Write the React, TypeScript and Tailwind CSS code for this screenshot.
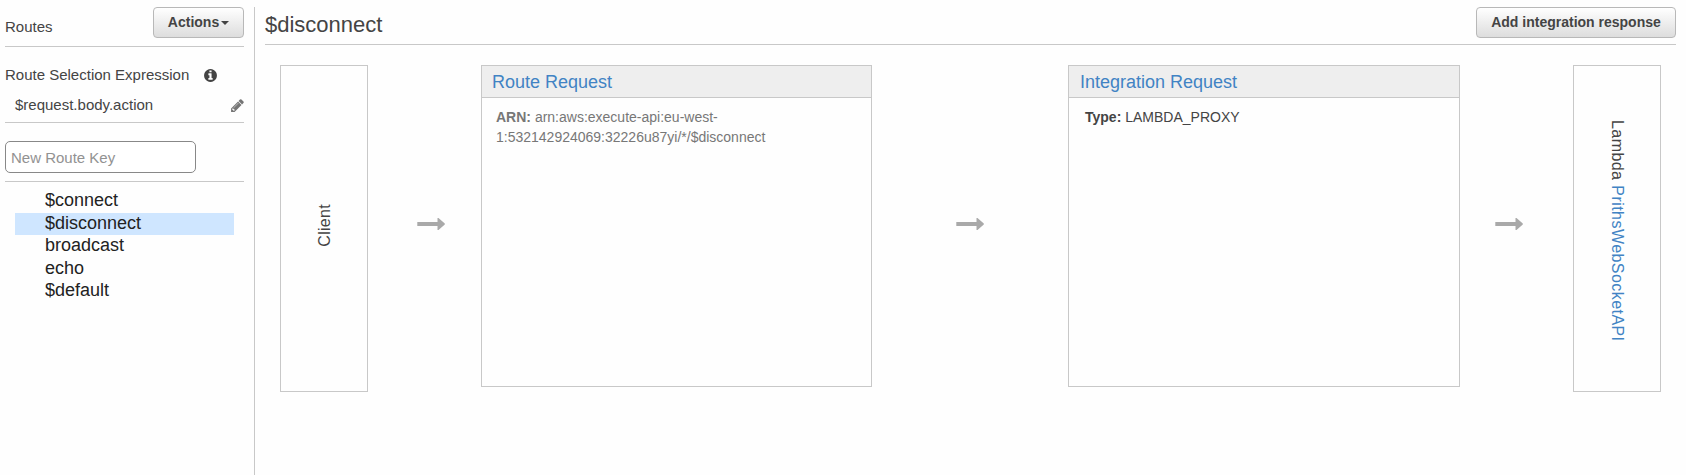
import React from "react";

const routes = ["$connect", "$disconnect", "broadcast", "echo", "$default"];

function ActionButton({ children, className = "" }: { children: React.ReactNode; className?: string }) {
  return (
    <button
      className={`flex h-[31px] items-center justify-center rounded-[4px] border border-[#b8b8b8] bg-linear-to-b from-white to-[#dddddd] pb-[2px] text-sm font-bold text-[#444444] ${className}`}
    >
      {children}
    </button>
  );
}

function InfoIcon() {
  return (
    <svg className="size-[15px]" viewBox="0 0 1792 1792" fill="currentColor">
      <path d="M1152 1376v-160q0-14-9-23t-23-9h-96v-512q0-14-9-23t-23-9h-320q-14 0-23 9t-9 23v160q0 14 9 23t23 9h96v320h-96q-14 0-23 9t-9 23v160q0 14 9 23t23 9h448q14 0 23-9t9-23zm-128-896v-160q0-14-9-23t-23-9h-192q-14 0-23 9t-9 23v160q0 14 9 23t23 9h192q14 0 23-9t9-23zm640 416q0 209-103 385.500t-279.500 279.500-385.500 103-385.500-103-279.500-279.500-103-385.500 103-385.500 279.500-279.500 385.500-103 385.500 103 279.500 279.500 103 385.500z" />
    </svg>
  );
}

function PencilIcon() {
  return (
    <svg className="size-[15px]" viewBox="0 0 1792 1792" fill="currentColor">
      <path d="M491 1536l91-91-235-235-91 91v107h128v128h107zm523-928q0-22-22-22-10 0-17 7l-542 542q-7 7-7 17 0 22 22 22 10 0 17-7l542-542q7-7 7-17zm-54-192l416 416-832 832h-416v-416zm683 96q0 53-37 90l-166 166-416-416 166-165q36-38 90-38 53 0 91 38l235 234q37 39 37 91z" />
    </svg>
  );
}

function Arrow({ className = "" }: { className?: string }) {
  return (
    <svg className={`mt-[153px] h-3 w-7 shrink-0 ${className}`} viewBox="0 0 28 12" fill="#a9a9a9">
      <path d="M0.300 4h20.200V0h1l6.300 5.500v1L21.500 12h-1V8H0.300z" />
    </svg>
  );
}

function Card({ title, className = "", children }: { title: React.ReactNode; className?: string; children: React.ReactNode }) {
  return (
    <section className={`h-[322px] shrink-0 border border-[#c8c8c8] ${className}`}>
      <h2 className="h-8 border-b border-[#c8c8c8] bg-[#eeeeee] pl-[10px] text-lg leading-[33px] text-[#4183c4]">{title}</h2>
      {children}
    </section>
  );
}

export default function App() {
  return (
    <div className="flex h-[475px] w-[1686px] overflow-hidden bg-[#fefefe] pt-[7px] font-['Liberation_Sans',Arial,sans-serif] text-[#444444]">
      <aside className="flex w-[244px] shrink-0 flex-col pl-[5px] text-[15px] leading-5">
        <div className="flex h-10 items-start justify-between border-b border-[#c8c8c8]">
          <span className="pt-[10px]">Routes</span>
          <ActionButton className="w-[91px] gap-[2px]">
            Actions
            <svg className="mt-[2px] h-1 w-2" viewBox="0 0 8 4" fill="currentColor">
              <path d="M0 0h8L4 4z" />
            </svg>
          </ActionButton>
        </div>
        <div className="flex h-[76px] flex-col border-b border-[#c8c8c8] pt-[18px]">
          <div className="flex items-center gap-[14px]">
            <span>Route Selection Expression</span>
            <InfoIcon />
          </div>
          <div className="mt-[10px] flex items-center justify-between pl-[10px]">
            <span>$request.body.action</span>
            <span className="-mr-[1px] text-[#757575]">
              <PencilIcon />
            </span>
          </div>
        </div>
        <div className="h-[59px] border-b border-[#c8c8c8] pt-[18px]">
          <input
            className="block h-8 w-[191px] rounded-[5px] border border-[#888888] bg-white px-[5px] pt-[1px] text-[15px] placeholder:text-[#929292]"
            placeholder="New Route Key"
          />
        </div>
        <ul className="mx-[10px] pt-[8px] text-lg leading-[20.500px] text-[#222222]">
          {routes.map((route) => (
            <li key={route} className={route === "$disconnect" ? "bg-[#cfe6ff] pb-[2px] pl-[30px]" : "pb-[2px] pl-[30px]"}>
              {route}
            </li>
          ))}
        </ul>
      </aside>
      <main className="ml-[10px] flex flex-1 flex-col border-l border-[#c8c8c8] pr-[10px] pl-[10px]">
        <header className="flex h-[38px] items-start justify-between border-b border-[#c8c8c8]">
          <h1 className="pt-[5px] text-[22px] leading-[26px]">$disconnect</h1>
          <ActionButton className="w-[200px]">Add integration response</ActionButton>
        </header>
        <div className="flex items-start pt-5 pl-[15px]">
          <div className="flex h-[327px] w-[88px] shrink-0 items-center justify-center border border-[#c8c8c8] pb-[6px] pl-[2px]">
            <span className="rotate-180 text-base leading-5 tracking-[0.300px] [writing-mode:vertical-rl]">Client</span>
          </div>
          <Arrow className="ml-[49px]" />
          <Card title="Route Request" className="ml-9 w-[391px]">
            <p className="px-[14px] pt-[9px] text-sm leading-5 text-[#777777]">
              <b>ARN:</b> arn:aws:execute-api:eu-west-
              <br />
              1:532142924069:32226u87yi/*/$disconnect
            </p>
          </Card>
          <Arrow className="ml-[84px]" />
          <Card title={<span className="pl-[1px]">Integration Request</span>} className="ml-[84px] w-[392px]">
            <p className="px-[16px] pt-[9px] text-sm leading-5">
              <b>Type:</b> LAMBDA_PROXY
            </p>
          </Card>
          <Arrow className="ml-[35px]" />
          <div className="ml-[50px] flex h-[327px] w-[88px] shrink-0 items-center justify-center border border-[#c8c8c8] pt-[4px] pr-[1px]">
            <span className="text-base leading-5 tracking-[0.440px] [writing-mode:vertical-rl]">
              Lambda <a className="text-[#4183c4]">PrithsWebSocketAPI</a>
            </span>
          </div>
        </div>
      </main>
    </div>
  );
}
